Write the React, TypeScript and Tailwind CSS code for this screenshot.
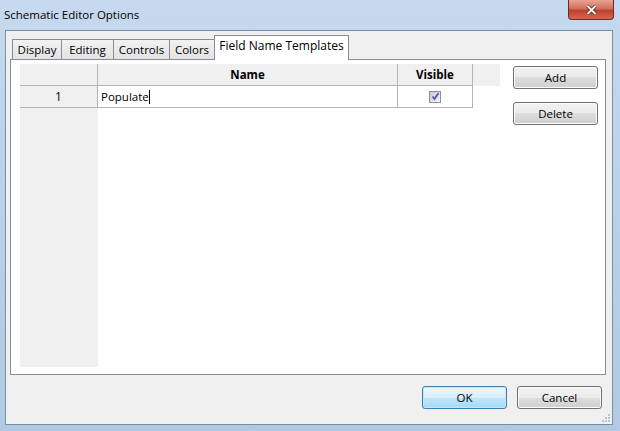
import React from 'react';

const font = { fontFamily: '"Segoe UI", "Open Sans", "Noto Sans", sans-serif' };

const tabs: { label: string; w: string }[] = [
  { label: 'Display', w: 'w-[49px]' },
  { label: 'Editing', w: 'w-[52px]' },
  { label: 'Controls', w: 'w-[56px]' },
  { label: 'Colors', w: 'w-[45px]' },
];

const WinButton: React.FC<{ label: string; primary?: boolean }> = ({ label, primary }) => (
  <button
    className={`w-[85px] h-[23px] rounded-[3px] border text-[11.5px] text-black ${
      primary
        ? 'border-[#3c7fb1] bg-[linear-gradient(#eaf6fd_0%,#d9f0fc_50%,#bee6fd_50%,#a7d9f5_100%)] shadow-[inset_0_0_0_1px_#c6e6f8]'
        : 'border-[#707070] bg-[linear-gradient(#f2f2f2_0%,#ebebeb_50%,#dddddd_50%,#cfcfcf_100%)] shadow-[inset_0_0_0_1px_#fcfcfc]'
    }`}
  >
    {label}
  </button>
);

const CheckIcon = () => (
  <div className="w-[12px] h-[12px] border border-[#8e8f8f] bg-[linear-gradient(135deg,#c4c9d3,#f4f4f6)] flex items-center justify-center">
    <svg width="9" height="9" viewBox="0 0 9 9">
      <path d="M1.5 4.5 L3.5 7 L7.5 1" fill="none" stroke="#4b5a9a" strokeWidth="1.7" />
    </svg>
  </div>
);

export default function App() {
  return (
    <div
      className="relative w-[620px] h-[431px] overflow-hidden bg-[linear-gradient(180deg,#c6d9ee_0%,#bcd2ea_40%,#b2c9e3_100%)] flex flex-col"
      style={font}
    >
      {/* title bar */}
      <div className="h-[30px] pl-[4px] pt-[6px] text-[11.5px] text-black">Schematic Editor Options</div>
      <div className="absolute right-[6px] top-0 w-[46px] h-[20px] rounded-b-[4px] border border-t-0 border-[#6d2a25] bg-[linear-gradient(#e8a493_0%,#d2705e_45%,#c1402c_55%,#d06a4e_100%)] flex items-center justify-center">
        <svg width="11" height="10" viewBox="0 0 11 10">
          <path d="M1.5 1 L9.5 9 M9.5 1 L1.5 9" stroke="#3a1a16" strokeWidth="3.2" />
          <path d="M1.5 1 L9.5 9 M9.5 1 L1.5 9" stroke="#ffffff" strokeWidth="1.8" />
        </svg>
      </div>

      {/* client area */}
      <div className="relative ml-[5px] mr-[7px] h-[395px] border border-[#7e8ea1] bg-[#f0f0f0] flex flex-col text-[11.5px] text-black">
        {/* tabs */}
        <div className="flex items-end h-[28px] pl-[6px] relative z-10">
          {tabs.map((t) => (
            <div
              key={t.label}
              className={`${t.w} h-[20px] border border-b-0 border-r-0 border-[#898c95] bg-[linear-gradient(#f2f2f2,#e3e3e3)] flex items-center justify-center leading-none`}
            >
              {t.label}
            </div>
          ))}
          <div className="w-[135px] h-[25px] -mb-[1px] border border-b-0 border-[#898c95] bg-white flex justify-center pt-[4px] leading-none text-[12px]">
            Field Name Templates
          </div>
        </div>

        {/* tab panel */}
        <div className="ml-[4px] mr-[6px] h-[316px] border border-[#898c95] bg-white flex pl-[9px] pt-[4px]">
          {/* grid */}
          <div className="w-[480px] h-[303px] flex flex-col">
            <div className="flex h-[22px] bg-[#f0f0f0] font-bold">
              <div className="w-[78px] border-r border-b border-[#b4b4b4]" />
              <div className="w-[300px] border-r border-b border-[#b4b4b4] flex items-center justify-center">Name</div>
              <div className="w-[75px] border-r border-b border-[#b4b4b4] flex items-center justify-center">Visible</div>
            </div>
            <div className="flex h-[22px]">
              <div className="w-[78px] bg-[#f0f0f0] border-r border-b border-[#b4b4b4] flex items-center justify-center text-[12px]">1</div>
              <div className="w-[300px] border-r border-b border-[#b4b4b4] flex items-center pl-[3px]">
                Populate<span className="w-px h-[14px] bg-black" />
              </div>
              <div className="w-[75px] border-r border-b border-[#b4b4b4] flex items-center justify-center">
                <CheckIcon />
              </div>
            </div>
            <div className="flex-1 flex">
              <div className="w-[78px] bg-[#f0f0f0]" />
            </div>
          </div>
          {/* side buttons */}
          <div className="ml-[13px] pt-[2px] flex flex-col gap-[13px]">
            <WinButton label="Add" />
            <WinButton label="Delete" />
          </div>
        </div>

        {/* bottom buttons */}
        <div className="flex justify-end gap-[10px] mt-[11px] pr-[10px]">
          <WinButton label="OK" primary />
          <WinButton label="Cancel" />
        </div>

        {/* resize grip */}
        <svg className="absolute right-[1px] bottom-[1px]" width="10" height="10" viewBox="0 0 10 10">
          {[
            [7, 1], [7, 4], [4, 4], [7, 7], [4, 7], [1, 7],
          ].map(([x, y], i) => (
            <rect key={i} x={x} y={y} width="2" height="2" fill="#b8c4d2" />
          ))}
        </svg>
      </div>
    </div>
  );
}
